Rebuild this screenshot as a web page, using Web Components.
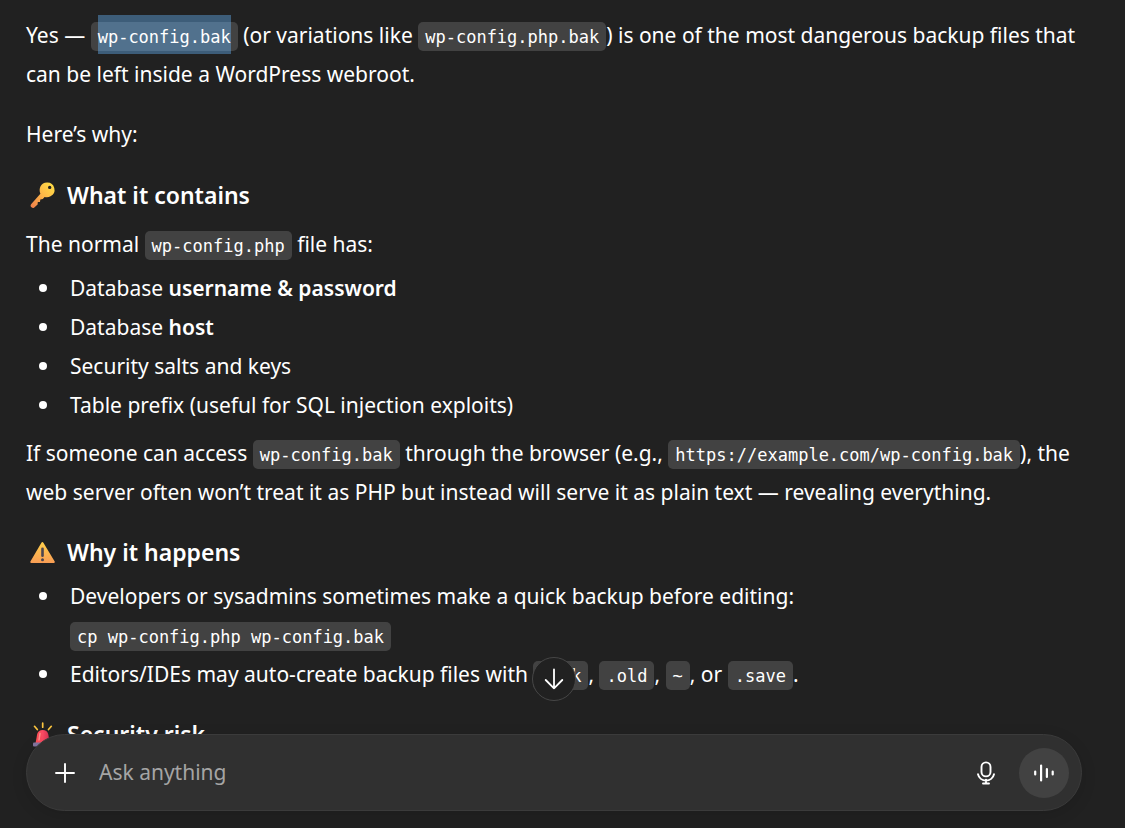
<!DOCTYPE html>
<html lang="en">
<head>
<meta charset="utf-8">
<meta name="viewport" content="width=device-width, initial-scale=1">
<title>Chat</title>
<style>
  html, body { margin: 0; height: 100%; background: #212121; }
  body { font-family: "Noto Sans", "Open Sans", sans-serif; color: #fff; }
</style>
</head>
<body>
<chat-app></chat-app>

<template id="app-tpl">
  <style>
    :host { display: block; position: relative; height: 100vh; overflow: hidden; }
    footer { position: absolute; left: 0; right: 0; bottom: 0; padding: 0 43px 17px 26px;
      display: flex; flex-direction: column; align-items: center; gap: 33px; }
    chat-composer { align-self: stretch; }
  </style>
  <chat-message></chat-message>
  <footer>
    <scroll-down></scroll-down>
    <chat-composer></chat-composer>
  </footer>
</template>

<template id="message-tpl">
  <style>
    :host { display: block; padding: 16px 34px 0 26px; font-size: 21px; line-height: 39px; }
    p { margin: 0; }
    .lead { margin-bottom: 21px; }
    ul { margin: 5px 0 9px; padding-left: 44px; list-style: none; }
    li { position: relative; }
    li::before { content: ""; position: absolute; left: -31px; top: 15px; width: 8px; height: 8px;
      border-radius: 50%; background: #fff; }
    b { font-weight: 600; }
    section { margin-top: 23px; }
    section:first-of-type { margin-top: 24px; }
    section-title + p { margin-top: 13px; }
    section-title + ul { margin-top: 8px; }
    mark { background: rgba(105, 185, 255, .4); color: inherit; padding: 12px 0 7px; }
  </style>
  <p class="lead">Yes — <code-chip><mark>wp-config.bak</mark></code-chip> (or variations like <code-chip>wp-config.php.bak</code-chip>) is one of the most dangerous backup files that can be left inside a WordPress webroot.</p>
  <p>Here’s why:</p>
  <section>
    <section-title><svg slot="icon" width="28" height="28" viewBox="0 0 28 28" aria-hidden="true">
        <defs><linearGradient id="k" x1="1" y1="0" x2="0" y2="1"><stop offset="0" stop-color="#ffe245"/><stop offset=".5" stop-color="#fdb648"/><stop offset="1" stop-color="#ee7c4b"/></linearGradient></defs>
        <path fill="url(#k)" fill-rule="evenodd" d="M19 1.500a7.300 7.300 0 0 1 3.500 13.800c-1.700 1-3.800 1.200-5.900.6l-1.800 2.200-2.500.4-.3 2.400-2.200.2-.2 2.300-3.300 3c-.9.8-2.400.7-3.200-.3-.8-1-.6-2.200.2-3.100l9.100-10.200C10.300 7.500 12.800 1.500 19 1.500zM21.700 4.700a1.700 1.700 0 1 0 0 3.400 1.700 1.700 0 0 0 0-3.400z"/>
      </svg>What it contains</section-title>
    <p>The normal <code-chip>wp-config.php</code-chip> file has:</p>
    <ul>
      <li>Database <b>username &amp; password</b></li>
      <li>Database <b>host</b></li>
      <li>Security salts and keys</li>
      <li>Table prefix (useful for SQL injection exploits)</li>
    </ul>
    <p>If someone can access <code-chip>wp-config.bak</code-chip> through the browser (e.g., <code-chip>https://example.com/wp-config.bak</code-chip>), the web server often won’t treat it as PHP but instead will serve it as plain text — revealing everything.</p>
  </section>
  <section>
    <section-title><svg slot="icon" width="28" height="28" viewBox="0 0 28 28" aria-hidden="true">
        <defs><linearGradient id="w" x1="0" y1="0" x2="0" y2="1"><stop offset="0" stop-color="#ffcf4a"/><stop offset="1" stop-color="#f99d55"/></linearGradient></defs>
        <path fill="url(#w)" d="M13.400 4.700c.5-.9 1.500-.9 2 0l11.300 18.800c.4.700 0 1.500-.9 1.500H3.300c-.9 0-1.300-.8-.9-1.500z"/>
        <rect x="13.200" y="9.500" width="2.600" height="9.500" rx="1.300" fill="#4b4550"/>
        <circle cx="14.500" cy="21.800" r="1.500" fill="#4b4550"/>
      </svg>Why it happens</section-title>
    <ul>
      <li>Developers or sysadmins sometimes make a quick backup before editing:<br><code-chip>cp wp-config.php wp-config.bak</code-chip></li>
      <li>Editors/IDEs may auto-create backup files with <code-chip>.bak</code-chip>, <code-chip>.old</code-chip>, <code-chip>~</code-chip>, or <code-chip>.save</code-chip>.</li>
    </ul>
  </section>
  <section>
    <section-title><svg slot="icon" width="28" height="28" viewBox="0 0 28 28" aria-hidden="true">
        <defs><linearGradient id="s"><stop offset="0" stop-color="#ff4f52"/><stop offset=".5" stop-color="#fb4a63"/><stop offset="1" stop-color="#d62f52"/></linearGradient></defs>
        <path d="M14.700 3.200v4M6.500 6.300l2.800 3.200M23.300 6.300l-2.800 3.200" stroke="#fcc53f" stroke-width="1.700" stroke-linecap="round"/>
        <path fill="url(#s)" d="M7.500 23.500 9.200 14c.6-2.600 2.800-4 5.500-4s4.900 1.400 5.500 4l1.700 9.500z"/>
        <path d="M12 13.500 11 20" stroke="#ff8f8d" stroke-width="1.500" stroke-linecap="round"/>
        <rect x="5" y="22.500" width="20" height="4" rx="1" fill="#8375a0"/>
      </svg>Security risk</section-title>
  </section>
</template>

<template id="title-tpl">
  <style>
    :host { display: block; }
    h3 { margin: 0; display: flex; align-items: center; gap: 11px; font-size: 23px; line-height: 34px; font-weight: 600; }
    ::slotted(svg) { display: block; margin-left: 2px; }
  </style>
  <h3><slot name="icon"></slot><span><slot></slot></span></h3>
</template>

<template id="chip-tpl"><style>
    :host { display: inline; }
    code { font-family: "DejaVu Sans Mono", monospace; font-size: 17px; line-height: 18px;
      padding: 5px 7px 4px; border-radius: 5px; background: #424242; }
  </style><code><slot></slot></code></template>

<template id="scroll-tpl">
  <style>
    :host { display: block; }
    button { display: grid; place-items: center; box-sizing: border-box; width: 44px; height: 44px; padding: 0;
      border: 1px solid #464646; border-radius: 50%; background: #212121; color: #fff; }
  </style>
  <button type="button" aria-label="Scroll to bottom">
    <svg width="24" height="24" viewBox="0 0 24 24" fill="none" stroke="currentColor" stroke-width="1.800" stroke-linecap="round" stroke-linejoin="round"><path d="M12 2.500v18.800M3.700 13l8.300 8.300 8.300-8.300"/></svg>
  </button>
</template>

<template id="composer-tpl">
  <style>
    :host { display: block; }
    form { display: flex; align-items: center; box-sizing: border-box; height: 77px; padding: 0 12px 0 25px;
      border: 1px solid #3b3b3b; border-radius: 39px; background: #303030; box-shadow: 0 4px 16px rgba(0, 0, 0, .12); }
    button { display: grid; place-items: center; flex: none; padding: 0; border: 0; background: none; color: #fff; }
    .add { width: 26px; height: 26px; }
    .mic { width: 26px; height: 26px; margin-right: 20px; }
    .voice { width: 50px; height: 50px; border-radius: 50%; background: #424242; }
    input { flex: 1; min-width: 0; margin: 0 21px; padding: 0; border: 0; outline: 0; background: none; color: #fff;
      font-family: inherit; font-size: 21px; line-height: 39px; }
    input::placeholder { color: #a5a5a5; opacity: 1; }
  </style>
  <form>
    <button class="add" type="button" aria-label="Add files">
      <svg width="26" height="26" viewBox="0 0 26 26" stroke="currentColor" stroke-width="1.900" stroke-linecap="round"><path d="M13 4v18M4 13h18"/></svg>
    </button>
    <input type="text" placeholder="Ask anything" aria-label="Ask anything">
    <button class="mic" type="button" aria-label="Dictate">
      <svg width="26" height="26" viewBox="0 0 26 26" fill="none" stroke="currentColor" stroke-width="1.900" stroke-linecap="round"><rect x="8.500" y="2.400" width="9" height="14" rx="4.500"/><path d="M5 14.200a8.200 8.200 0 0 0 16 0M13 19.800v3.600M10 23.500h6"/></svg>
    </button>
    <button class="voice" type="button" aria-label="Voice mode">
      <svg width="24" height="24" viewBox="0 0 24 24" stroke="currentColor" stroke-width="2.200" stroke-linecap="round"><path d="M3.200 10.500v3M9.100 4.500v15M14.900 8v8M20.700 10.500v3"/></svg>
    </button>
  </form>
</template>

<script>
  class TemplateElement extends HTMLElement {
    constructor() {
      super();
      const tpl = document.getElementById(this.constructor.template);
      this.attachShadow({ mode: "open" }).append(tpl.content.cloneNode(true));
    }
  }
  const define = (name, template) =>
    customElements.define(name, class extends TemplateElement { static template = template; });
  define("code-chip", "chip-tpl");
  define("section-title", "title-tpl");
  define("scroll-down", "scroll-tpl");
  define("chat-composer", "composer-tpl");
  define("chat-message", "message-tpl");
  define("chat-app", "app-tpl");
</script>
</body>
</html>
